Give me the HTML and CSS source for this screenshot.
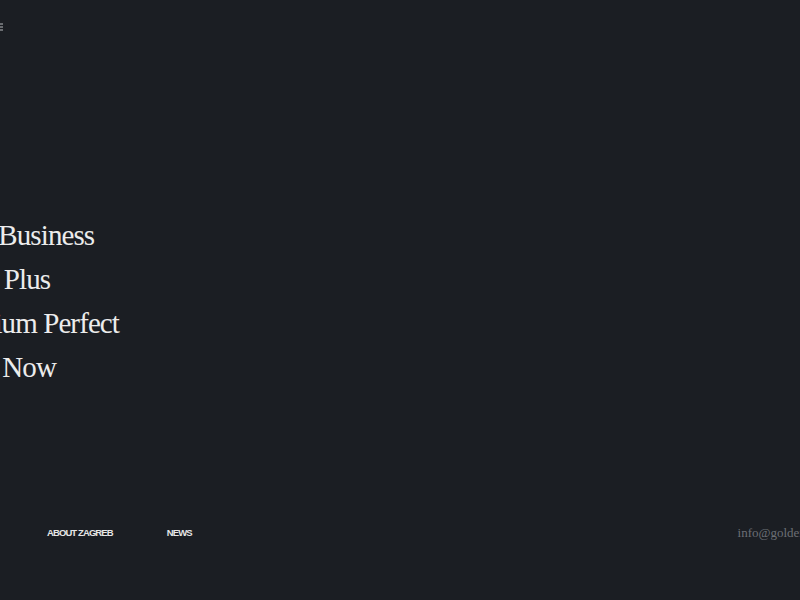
FILE: index.html
```html
<!DOCTYPE html>
<html lang="en">
<head>
<meta charset="utf-8">
<title>Golden Business Center</title>
<link rel="stylesheet" href="styles.css">
</head>
<body>
<div class="page">
  <header class="top">
    <button class="menu" aria-label="Menu">
      <svg width="18" height="8" viewBox="0 0 18 8"><path d="M0 1h18M0 4h18M0 7h18" stroke="#b9bbbf" stroke-width="1"/></svg>
    </button>
  </header>
  <main class="hero">
    <h1 class="headline">
      <span class="line">Golden Business</span>
      <span class="line">Premier Plus</span>
      <span class="line">A Premium Perfect</span>
      <span class="line">Contact Now</span>
    </h1>
  </main>
  <footer class="foot">
    <nav class="nav">
      <a href="#">ABOUT ZAGREB</a>
      <a href="#">NEWS</a>
    </nav>
    <a class="mail" href="#">info@goldenbusiness.hr</a>
  </footer>
</div>
</body>
</html>
```
FILE: styles.css
```css
html, body {
  margin: 0;
  padding: 0;
  background: #1b1e23;
}
.page {
  width: 800px;
  height: 600px;
  overflow: hidden;
  display: flex;
  flex-direction: column;
  background: #1b1e23;
}
.top {
  padding-top: 23px;
  height: 10px;
}
.menu {
  display: block;
  margin: 0 0 0 -15px;
  padding: 0;
  border: 0;
  background: none;
  line-height: 0;
}
.hero {
  margin-top: 180px;
}
.headline {
  margin: 0 0 0 -88px;
  font-family: "Liberation Serif", serif;
  font-weight: normal;
  font-size: 29px;
  line-height: 44px;
  letter-spacing: -0.9px;
  color: #ececec;
  white-space: nowrap;
}
.line {
  display: block;
}
.foot {
  margin-top: 136px;
  display: flex;
  align-items: center;
  height: 16px;
}
.nav {
  display: flex;
  gap: 54px;
  padding-left: 47px;
}
.nav a {
  font-family: "Liberation Sans", Arial, sans-serif;
  font-size: 9.5px;
  font-weight: bold;
  line-height: 16px;
  letter-spacing: -0.9px;
  color: #e6e6e6;
  text-decoration: none;
}
.mail {
  margin-left: auto;
  margin-right: -64px;
  flex-shrink: 0;
  font-family: "Liberation Serif", serif;
  font-size: 13px;
  color: #6c6f75;
  text-decoration: none;
  white-space: nowrap;
}
```
